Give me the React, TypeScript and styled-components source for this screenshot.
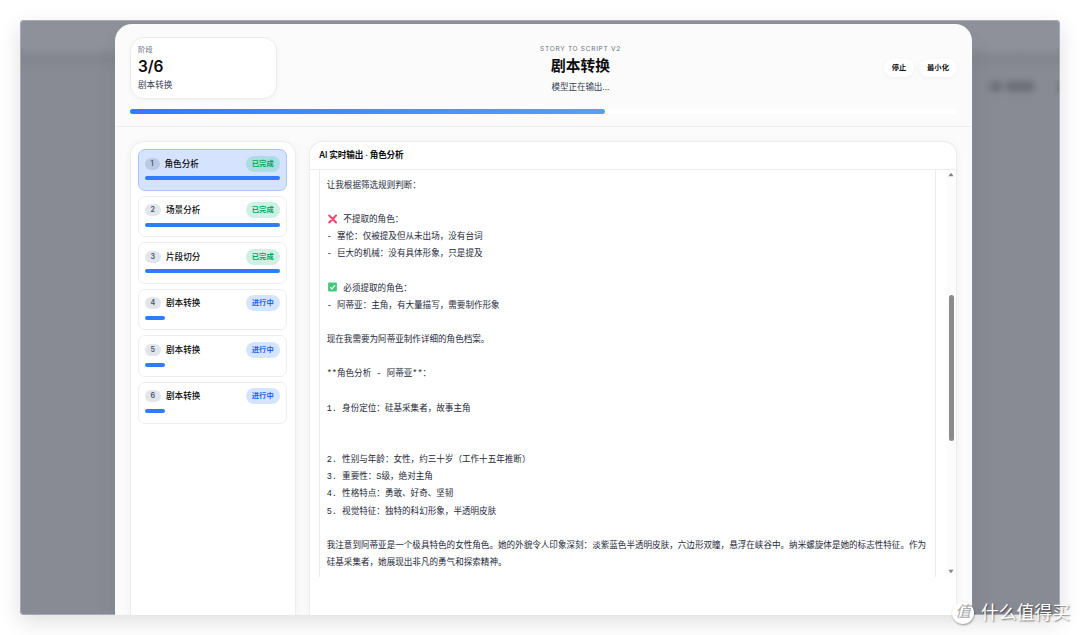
import React from "react";
import styled, { createGlobalStyle, css } from "styled-components";

const GlobalStyle = createGlobalStyle`
  *, *::before, *::after { box-sizing: border-box; }
  body {
    margin: 0;
    background: #fff;
    color: #0b0b0d;
    font-family: Inter, "Noto Sans CJK SC", sans-serif;
  }
`;

const Page = styled.div`
  position: relative;
  width: 1080px;
  height: 635px;
  padding: 20px 20px;
  overflow: hidden;
`;

const Screen = styled.div`
  position: relative;
  display: flex;
  justify-content: center;
  height: 594.5px;
  padding: 4px 0 0 7px;
  border-radius: 4px;
  background: linear-gradient(#8e9199 0, #8e9199 26px, #84868f 38px, #888b93 52px, #888b93 100%);
  box-shadow: 0 7px 22px rgba(0, 0, 0, 0.13);
`;

const Clip = styled.div`
  position: absolute;
  inset: 0;
  overflow: hidden;
  border-radius: 4px;
  border: 1px solid rgba(185, 187, 195, 0.65);
`;

const BlurredLabel = styled.div`
  position: absolute;
  top: 60px;
  right: 25px;
  display: flex;
  gap: 4px;
  filter: blur(3px);
`;

const BlurredBit = styled.span<{ $w: number }>`
  width: ${(p) => p.$w}px;
  height: 11px;
  border-radius: 3px;
  background: #6c6f78;
`;

const EdgeDot = styled.span`
  position: absolute;
  top: 61px;
  right: -4px;
  width: 5px;
  height: 10px;
  background: #6c6f78;
  filter: blur(2px);
`;

const Modal = styled.main`
  position: relative;
  display: flex;
  flex-direction: column;
  width: 857px;
  height: 590.5px;
  overflow: hidden;
  border-radius: 17px 17px 0 0;
  background: #fbfbfb;
`;

const ModalShade = styled.div`
  position: absolute;
  top: 3.5px;
  left: 95px;
  width: 857px;
  height: 620px;
  border-radius: 17px;
  box-shadow: 0 14px 20px rgba(60, 60, 75, 0.1);
`;

const Header = styled.header`
  flex: none;
  height: 102.5px;
  padding: 13px 15px 0;
  border-bottom: 1px solid #ecedef;
`;

const HeaderRow = styled.div`
  display: grid;
  grid-template-columns: 147px 1fr 73px;
  height: 62px;
`;

const StageCard = styled.section`
  display: flex;
  flex-direction: column;
  padding: 7px 7px;
  border: 1px solid #eaecef;
  border-radius: 14px;
  background: #fff;
  box-shadow: 0 1px 4px rgba(20, 30, 50, 0.04);
`;

const StageLabel = styled.span`
  font-size: 7.14px;
  line-height: 10px;
  letter-spacing: 0.5px;
  color: #6a7282;
`;

const StageCount = styled.span`
  margin-top: 2px;
  font-size: 15.4px;
  font-weight: 600;
  line-height: 20px;
`;

const StageName = styled.span`
  margin-top: 2px;
  font-size: 8.57px;
  line-height: 12px;
  color: #364153;
`;

const TitleBlock = styled.div`
  display: flex;
  flex-direction: column;
  align-items: center;
  padding: 7px 0 0 0;
  white-space: nowrap;
`;

const Eyebrow = styled.span`
  font-size: 6.55px;
  line-height: 10px;
  letter-spacing: 0.7px;
  color: #6a7282;
`;

const Title = styled.h1`
  margin: 1.5px 0 0;
  font-size: 14.7px;
  font-weight: 700;
  line-height: 20px;
`;

const Subtitle = styled.span`
  margin-top: 5px;
  font-size: 8.57px;
  line-height: 12px;
  letter-spacing: -0.1px;
  color: #364153;
`;

const Actions = styled.div`
  display: flex;
  align-items: center;
  justify-content: flex-end;
  gap: 5px;
  padding-bottom: 1px;
`;

const Pill = styled.button<{ $w: number }>`
  flex: none;
  width: ${(p) => p.$w}px;
  height: 18px;
  padding: 0;
  border: 0;
  border-radius: 9px;
  background: #fff;
  box-shadow: 0 1px 4px rgba(20, 30, 50, 0.05);
  font-family: inherit;
  font-size: 7.3px;
  font-weight: 700;
  line-height: 17px;
  color: #111;
  white-space: nowrap;
`;

const StageTrack = styled.div`
  height: 5px;
  margin-top: 10px;
  border-radius: 3px;
  background: #fff;
`;

const StageFill = styled.div`
  width: 475px;
  height: 100%;
  border-radius: 3px;
  background: linear-gradient(90deg, #2b7fff, #51a2ff);
`;

const Body = styled.div`
  display: flex;
  gap: 12.5px;
  flex: 1;
  min-height: 0;
  padding: 14.5px 15px 0;
`;

const panel = css`
  border: 1px solid #ebedf0;
  border-bottom: 0;
  border-radius: 14px 14px 0 0;
  background: #fff;
  box-shadow: 0 1px 8px rgba(20, 30, 50, 0.045);
`;

const StepPanel = styled.aside`
  ${panel}
  display: flex;
  flex-direction: column;
  gap: 5px;
  flex: none;
  width: 166px;
  padding: 7px 8px 0 7px;
`;

const Step = styled.div<{ $active: boolean }>`
  flex: none;
  height: 41.6px;
  padding: 5.5px 6px 0 5.5px;
  border: 1px solid ${(p) => (p.$active ? "#a6c6ff" : "#edeef1")};
  border-radius: 7px;
  background: ${(p) => (p.$active ? "#d5e3ff" : "#fff")};
`;

const StepRow = styled.div`
  display: flex;
  align-items: center;
  height: 16px;
`;

const StepNumber = styled.span<{ $active: boolean }>`
  width: ${(p) => (p.$active ? 15 : 16.5)}px;
  height: 12px;
  margin-right: 5px;
  border-radius: 6px;
  background: ${(p) => (p.$active ? "#bacae5" : "#e2e6eb")};
  font-size: 7.14px;
  font-weight: 600;
  line-height: 12px;
  text-align: center;
  color: #45556c;
`;

const StepName = styled.span`
  flex: 1;
  font-size: 8.57px;
  font-weight: 500;
  line-height: 14px;
`;

const Status = styled.span<{ $done: boolean; $active: boolean }>`
  width: 34.5px;
  height: 16px;
  border-radius: 8px;
  background: ${(p) => (p.$done ? (p.$active ? "#acdce3" : "#cff1e4") : "#d5e5ff")};
  color: ${(p) => (p.$done ? "#07a567" : "#1d63ed")};
  font-size: 7.3px;
  font-weight: 600;
  line-height: 15.5px;
  text-align: center;
`;

const StepBar = styled.div<{ $done: boolean }>`
  width: ${(p) => (p.$done ? "100%" : "20px")};
  height: 4px;
  margin-top: 4.7px;
  border-radius: 2px;
  background: #2f7cff;
`;

const OutputPanel = styled.section`
  ${panel}
  display: flex;
  flex-direction: column;
  flex: 1;
  min-width: 0;
`;

const OutputTitle = styled.h2`
  flex: none;
  height: 27.5px;
  margin: 0;
  padding-left: 9.5px;
  border-bottom: 1px solid #ededf0;
  font-size: 8.57px;
  font-weight: 600;
  line-height: 27px;
  letter-spacing: -0.13px;
`;

const ScrollArea = styled.div`
  display: flex;
  height: 407px;
  padding-left: 9px;
`;

const Output = styled.div`
  width: 619px;
  margin-right: 10px;
  padding: 8.4px 6.6px 0 7.2px;
  border: solid #ebebee;
  border-width: 0 1px;
  font-family: "Liberation Mono", "Noto Sans CJK SC", monospace;
  font-size: 8.57px;
  line-height: 17.143px;
  color: #1e2939;
`;

const Line = styled.div`
  height: 17.143px;
  white-space: pre;
`;

const Mark = styled.svg`
  width: 11.5px;
  height: 10px;
  vertical-align: -1.5px;
`;

const Scrollbar = styled.div`
  display: flex;
  flex-direction: column;
  align-items: center;
  justify-content: space-between;
  width: 10px;
  padding: 2.5px 0 2.5px;
  background: #fcfcfc;
`;

const Thumb = styled.div`
  width: 5px;
  height: 146px;
  margin-bottom: 11px;
  border-radius: 3px;
  background: #8b8b8b;
`;

const Arrow = styled.svg`
  width: 6px;
  height: 5px;
`;

const Watermark = styled.div`
  position: absolute;
  left: 952px;
  top: 601px;
  display: flex;
  align-items: center;
  gap: 7px;
  height: 24px;
  color: #fff;
  font-size: 17.8px;
  font-weight: 400;
  line-height: 22px;
  white-space: nowrap;
  text-shadow: 1px 1px 1.5px rgba(0, 0, 0, 0.5);
`;

const WatermarkText = styled.span`
  padding-bottom: 1px;
`;

const Seal = styled.span`
  width: 22px;
  height: 22px;
  border-radius: 50%;
  background: #fff;
  box-shadow: 0.5px 1px 2px rgba(0, 0, 0, 0.4);
  color: #aaa;
  font-size: 15.5px;
  font-style: italic;
  line-height: 20px;
  text-align: center;
  text-shadow: none;
`;

const steps = [
  { name: "角色分析", done: true },
  { name: "场景分析", done: true },
  { name: "片段切分", done: true },
  { name: "剧本转换", done: false },
  { name: "剧本转换", done: false },
  { name: "剧本转换", done: false },
];

const Cross = () => (
  <Mark viewBox="0 0 11.5 10">
    <path d="M2.2 1.6 9 8.4M9 1.6 2.2 8.4" stroke="#f8476f" strokeWidth="2.1" strokeLinecap="round" />
  </Mark>
);

const Check = () => (
  <Mark viewBox="0 0 11.5 10">
    <rect x="1.1" y="0.6" width="8.8" height="8.8" rx="1" fill="#43c97c" />
    <path d="M3.2 5.2 4.9 6.9 8 3.3" fill="none" stroke="#fff" strokeWidth="1.2" />
  </Mark>
);

const lines: React.ReactNode[] = [
  "让我根据筛选规则判断：",
  "",
  <><Cross /> 不提取的角色：</>,
  "- 塞伦：仅被提及但从未出场，没有台词",
  "- 巨大的机械：没有具体形象，只是提及",
  "",
  <><Check /> 必须提取的角色：</>,
  "- 阿蒂亚：主角，有大量描写，需要制作形象",
  "",
  "现在我需要为阿蒂亚制作详细的角色档案。",
  "",
  "**角色分析 - 阿蒂亚**：",
  "",
  "1. 身份定位：硅基采集者，故事主角",
  "",
  "",
  "2. 性别与年龄：女性，约三十岁（工作十五年推断）",
  "3. 重要性：S级，绝对主角",
  "4. 性格特点：勇敢、好奇、坚韧",
  "5. 视觉特征：独特的科幻形象，半透明皮肤",
  "",
  "我注意到阿蒂亚是一个极具特色的女性角色。她的外貌令人印象深刻：淡紫蓝色半透明皮肤，六边形双瞳，悬浮在峡谷中。纳米螺旋体是她的标志性特征。作为",
  "硅基采集者，她展现出非凡的勇气和探索精神。",
];

export default function App() {
  return (
    <Page lang="zh-CN">
      <GlobalStyle />
      <Screen>
        <Clip>
          <ModalShade />
          <BlurredLabel>
            <BlurredBit $w={12} />
            <BlurredBit $w={28} />
          </BlurredLabel>
          <EdgeDot />
        </Clip>
        <Modal>
          <Header>
            <HeaderRow>
              <StageCard>
                <StageLabel>阶段</StageLabel>
                <StageCount>3/6</StageCount>
                <StageName>剧本转换</StageName>
              </StageCard>
              <TitleBlock>
                <Eyebrow>STORY TO SCRIPT V2</Eyebrow>
                <Title>剧本转换</Title>
                <Subtitle>模型正在输出...</Subtitle>
              </TitleBlock>
              <Actions>
                <Pill $w={30}>停止</Pill>
                <Pill $w={38}>最小化</Pill>
              </Actions>
            </HeaderRow>
            <StageTrack>
              <StageFill />
            </StageTrack>
          </Header>
          <Body>
            <StepPanel>
              {steps.map((step, i) => (
                <Step key={i} $active={i === 0}>
                  <StepRow>
                    <StepNumber $active={i === 0}>{i + 1}</StepNumber>
                    <StepName>{step.name}</StepName>
                    <Status $done={step.done} $active={i === 0}>
                      {step.done ? "已完成" : "进行中"}
                    </Status>
                  </StepRow>
                  <StepBar $done={step.done} />
                </Step>
              ))}
            </StepPanel>
            <OutputPanel>
              <OutputTitle>AI 实时输出 · 角色分析</OutputTitle>
              <ScrollArea>
                <Output>
                  {lines.map((line, i) => (
                    <Line key={i}>{line}</Line>
                  ))}
                </Output>
                <Scrollbar>
                  <Arrow viewBox="0 0 6 5"><path d="M3 0.8 5.6 4.3H0.4Z" fill="#858585" /></Arrow>
                  <Thumb />
                  <Arrow viewBox="0 0 6 5"><path d="M3 4.2 5.6 0.7H0.4Z" fill="#858585" /></Arrow>
                </Scrollbar>
              </ScrollArea>
            </OutputPanel>
          </Body>
        </Modal>
      </Screen>
      <Watermark>
        <Seal>值</Seal>
        <WatermarkText>什么值得买</WatermarkText>
      </Watermark>
    </Page>
  );
}
